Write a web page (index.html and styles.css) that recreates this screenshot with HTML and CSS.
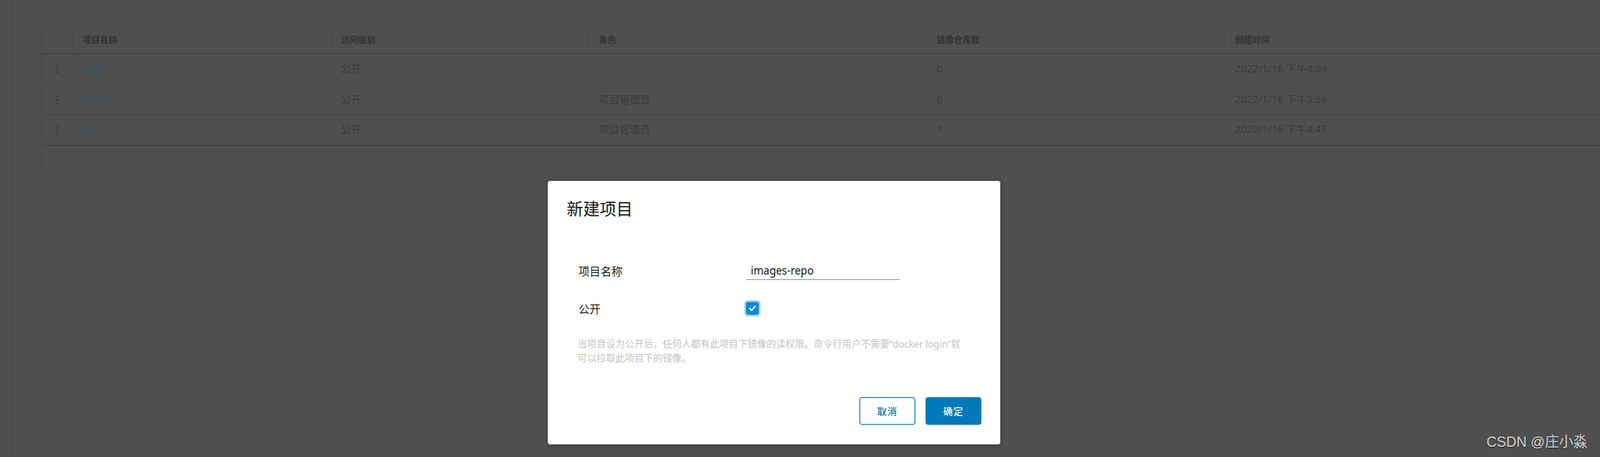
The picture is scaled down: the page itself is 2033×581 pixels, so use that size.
FILE: index.html
```html
<!DOCTYPE html>
<html lang="zh-CN">
<head>
<meta charset="utf-8">
<title>项目</title>
<link rel="stylesheet" href="styles.css">
</head>
<body>
<div class="app">
  <aside class="sidebar"></aside>
  <main class="content">
    <div class="grid">
      <div class="grid-head">
        <div class="hcell hcell-action"></div>
        <div class="hcell"><span class="hlabel">项目名称</span></div>
        <div class="hcell"><span class="hlabel">访问级别</span></div>
        <div class="hcell"><span class="hlabel">角色</span></div>
        <div class="hcell"><span class="hlabel">镜像仓库数</span></div>
        <div class="hcell"><span class="hlabel">创建时间</span></div>
      </div>
      <div class="grid-row">
        <div class="cell cell-action"><svg class="kebab" width="4" height="12" viewBox="0 0 4 12"><circle cx="2" cy="2" r="1.1"/><circle cx="2" cy="6" r="1.1"/><circle cx="2" cy="10" r="1.1"/></svg></div>
        <div class="cell"><span class="link">emc</span></div>
        <div class="cell">公开</div>
        <div class="cell"></div>
        <div class="cell">0</div>
        <div class="cell">2022/1/16 下午4:09</div>
      </div>
      <div class="grid-row">
        <div class="cell cell-action"><svg class="kebab" width="4" height="12" viewBox="0 0 4 12"><circle cx="2" cy="2" r="1.1"/><circle cx="2" cy="6" r="1.1"/><circle cx="2" cy="10" r="1.1"/></svg></div>
        <div class="cell"><span class="link">library</span></div>
        <div class="cell">公开</div>
        <div class="cell">项目管理员</div>
        <div class="cell">0</div>
        <div class="cell">2022/1/16 下午3:56</div>
      </div>
      <div class="grid-row grid-row-last">
        <div class="cell cell-action"><svg class="kebab" width="4" height="12" viewBox="0 0 4 12"><circle cx="2" cy="2" r="1.1"/><circle cx="2" cy="6" r="1.1"/><circle cx="2" cy="10" r="1.1"/></svg></div>
        <div class="cell"><span class="link">xjl</span></div>
        <div class="cell">公开</div>
        <div class="cell">项目管理员</div>
        <div class="cell">1</div>
        <div class="cell">2022/1/16 下午4:47</div>
      </div>
      <div class="grid-foot"></div>
    </div>
  </main>
</div>

<div class="modal">
  <h3 class="modal-title">新建项目</h3>
  <form class="modal-body">
    <div class="form-row">
      <label class="form-label">项目名称</label>
      <input class="text-input" type="text" value="images-repo">
    </div>
    <div class="form-row form-row-check">
      <label class="form-label">公开</label>
      <span class="checkbox"><svg width="16" height="16" viewBox="0 0 16 16"><polyline points="4.5,8.2 7,10.5 11.5,5.5" fill="none" stroke="#fff" stroke-width="1.8" stroke-linecap="round" stroke-linejoin="round"/></svg></span>
    </div>
    <p class="help">当项目设为公开后，任何人都有此项目下镜像的读权限。命令行用户不需要“docker login”就<br>可以拉取此项目下的镜像。</p>
  </form>
  <div class="modal-footer">
    <button class="btn btn-outline" type="button">取消</button>
    <button class="btn btn-primary" type="button">确定</button>
  </div>
</div>

<div class="watermark">CSDN @庄小淼</div>
</body>
</html>
```

FILE: styles.css
```css
html, body {
  margin: 0;
  padding: 0;
}

body {
  width: 2033px;
  height: 581px;
  overflow: hidden;
  background: #4f4f4f;
  font-family: "Noto Sans", "Noto Sans CJK SC", sans-serif;
  color: #3b3b3b;
  position: relative;
}

.app {
  display: flex;
  height: 581px;
}

.sidebar {
  width: 15px;
  flex: 0 0 15px;
  border-right: 1px solid #464646;
}

.content {
  flex: 1;
  padding: 32px 0 0 37px;
  overflow: hidden;
}

.grid {
  border: 1px solid #474747;
  border-right: none;
  border-radius: 2px 0 0 2px;
}

.grid-head,
.grid-row {
  display: grid;
  grid-template-columns: 38px 328px 328px 429px 379px 1fr;
}

.grid-head {
  height: 34px;
  align-items: center;
  border-bottom: 2px solid #444444;
}

.hcell {
  height: 23px;
  border-left: 1px solid #484848;
  padding-left: 12px;
  display: flex;
  align-items: center;
}

.hcell-action {
  border-left: none;
}

.hlabel {
  font-size: 11px;
  font-weight: 700;
  color: #333333;
}

.grid-row {
  height: 38px;
  align-items: center;
  border-bottom: 1px solid #484848;
  font-size: 13px;
  line-height: 16px;
}

.grid-row-last {
  height: 37px;
  border-bottom: 2px solid #454545;
}

.cell {
  padding-left: 13px;
  padding-bottom: 3px;
  color: #3a3a3a;
  white-space: nowrap;
}

.cell-action {
  padding-left: 0;
  padding-bottom: 1px;
  display: flex;
  justify-content: center;
}

.kebab {
  fill: #343434;
}

.link {
  color: #2a5670;
}

.grid-foot {
  height: 33px;
}

.modal {
  position: absolute;
  left: 696px;
  top: 230px;
  width: 575px;
  box-sizing: border-box;
  padding: 21px 24px 25px 24px;
  background: #ffffff;
  border-radius: 3px;
  box-shadow: 0 1px 4px rgba(0, 0, 0, 0.35);
  color: #000;
}

.modal-title {
  margin: 0;
  font-size: 21px;
  line-height: 28px;
  font-weight: 400;
  color: #111;
}

.modal-body {
  margin: 50px 0 0 15px;
}

.form-row {
  display: flex;
  align-items: center;
  height: 30px;
}

.form-row-check {
  margin-top: 18px;
}

.form-label {
  width: 213px;
  font-size: 14px;
  color: #1a1a1a;
  padding-bottom: 1px;
}

.text-input {
  width: 195px;
  height: 24px;
  box-sizing: border-box;
  border: none;
  border-bottom: 1px solid #9a9a9a;
  padding: 0 0 0 6px;
  margin: 0;
  font-family: "Noto Sans", "Noto Sans CJK SC", sans-serif;
  font-size: 13.5px;
  color: #111;
  background: transparent;
  outline: none;
}

.checkbox {
  width: 16px;
  height: 16px;
  border-radius: 3px;
  background: #0a8bd0;
  box-shadow: 0 0 2px 1.5px rgba(40, 150, 220, 0.55);
  display: flex;
}

.help {
  margin: 22px 0 0 -1px;
  font-size: 12px;
  line-height: 18px;
  color: #c4c4c4;
}

.modal-footer {
  display: flex;
  justify-content: flex-end;
  gap: 13px;
  margin-top: 40px;
}

.btn {
  width: 71px;
  height: 35px;
  box-sizing: border-box;
  border-radius: 3px;
  font-family: "Noto Sans", "Noto Sans CJK SC", sans-serif;
  font-size: 12px;
  font-weight: 500;
  letter-spacing: 1px;
  cursor: pointer;
  padding: 0;
}

.btn-outline {
  background: #fff;
  border: 1px solid #0079b8;
  color: #0079b8;
}

.btn-primary {
  background: #0079b8;
  border: 1px solid #0079b8;
  color: #fff;
}

.watermark {
  position: absolute;
  right: 16px;
  bottom: 8px;
  font-family: "Liberation Sans", "Noto Sans CJK SC", sans-serif;
  font-size: 18px;
  color: #d2d2d2;
  text-shadow: 0 1px 1px rgba(0, 0, 0, 0.5);
}
```
